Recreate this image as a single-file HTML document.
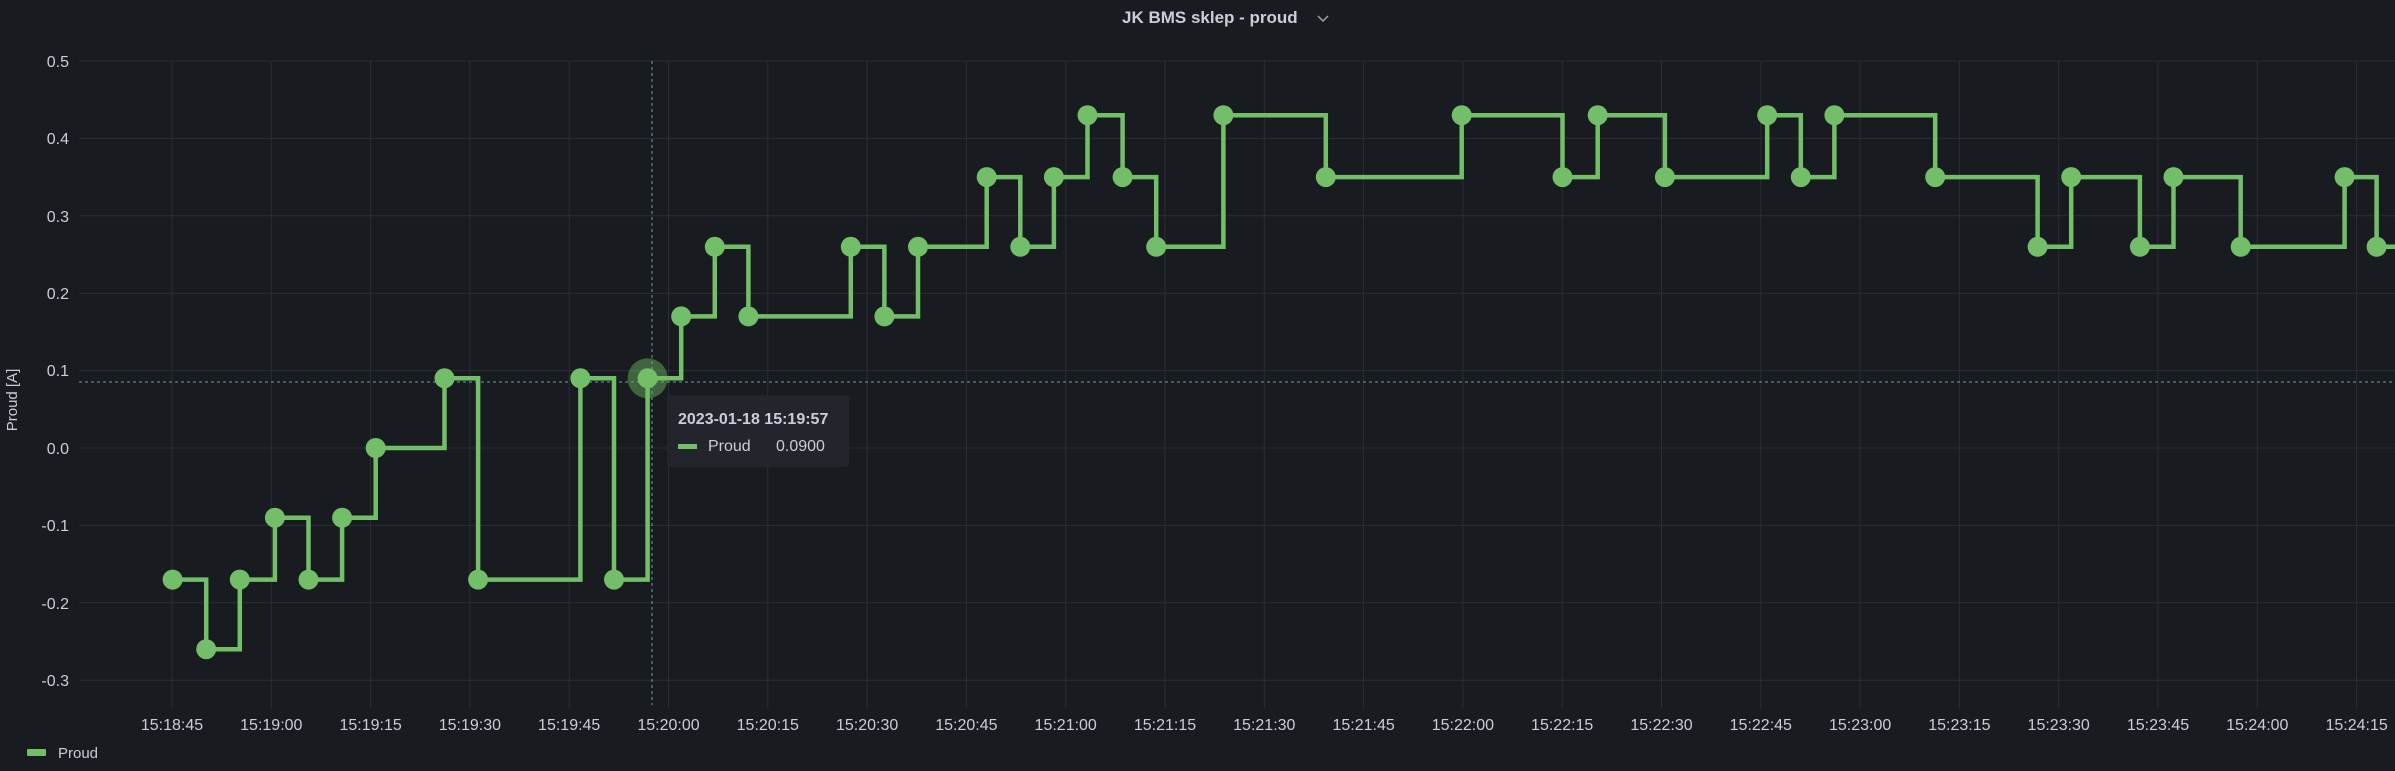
<!DOCTYPE html>
<html><head><meta charset="utf-8"><style>
html,body{margin:0;padding:0;background:#181b1f;width:2395px;height:771px;overflow:hidden}
svg{display:block}
text{font-family:"Liberation Sans",sans-serif;fill:#ccccdc}
</style></head><body>
<svg width="2395" height="771" viewBox="0 0 2395 771">
<rect width="2395" height="771" fill="#181b1f"/>
<text x="1122" y="23" font-size="17" font-weight="bold" fill="#d8d9e3">JK BMS sklep - proud</text>
<path d="M1318 16 l5 5 l5 -5" stroke="#9fa1ab" stroke-width="1.5" fill="none"/>
<g stroke="#2b2e34" stroke-width="1">
<line x1="79" x2="2395" y1="61" y2="61"/><line x1="79" x2="2395" y1="138.4" y2="138.4"/>
<line x1="79" x2="2395" y1="215.8" y2="215.8"/><line x1="79" x2="2395" y1="293.2" y2="293.2"/>
<line x1="79" x2="2395" y1="370.6" y2="370.6"/><line x1="79" x2="2395" y1="448" y2="448"/>
<line x1="79" x2="2395" y1="525.4" y2="525.4"/><line x1="79" x2="2395" y1="602.8" y2="602.8"/>
<line x1="79" x2="2395" y1="680.2" y2="680.2"/>
</g>
<g id="vg" stroke="#2b2e34" stroke-width="1"></g>
<g font-size="16" text-anchor="end">
<text x="69" y="67">0.5</text><text x="69" y="144">0.4</text><text x="69" y="222">0.3</text>
<text x="69" y="299">0.2</text><text x="69" y="376">0.1</text><text x="69" y="454">0.0</text>
<text x="69" y="531">-0.1</text><text x="69" y="609">-0.2</text><text x="69" y="686">-0.3</text>
</g>
<text transform="translate(17,400) rotate(-90)" font-size="15" text-anchor="middle">Proud [A]</text>
<g id="xl" font-size="16" text-anchor="middle"></g>
<line x1="652" x2="652" y1="61" y2="705" stroke="#8ab8d0" stroke-width="1" stroke-dasharray="3,3" opacity="0.8"/>
<line x1="79" x2="2395" y1="382" y2="382" stroke="#8ab8d0" stroke-width="1" stroke-dasharray="3,3" opacity="0.8"/>
<path fill="none" stroke="#73bf69" stroke-width="4.5" stroke-linejoin="miter" d="M172.6 579.6 H206.2 V649.2 H239.8 V579.6 H274.9 V517.7 H308.5 V579.6 H342.1 V517.7 H375.7 V448 H444.5 V378.3 H478.1 V579.6 H580.4 V378.3 H614 V579.6 H647.6 V378.3 H681.2 V316.4 H714.8 V246.8 H748.4 V316.4 H850.8 V246.8 H884.4 V316.4 H918 V246.8 H986.7 V177.1 H1020.3 V246.8 H1053.9 V177.1 H1087.5 V115.2 H1122.6 V177.1 H1156.2 V246.8 H1223.4 V115.2 H1325.8 V177.1 H1461.7 V115.2 H1562.5 V177.1 H1597.7 V115.2 H1664.9 V177.1 H1767.2 V115.2 H1800.8 V177.1 H1834.4 V115.2 H1935.2 V177.1 H2037.6 V246.8 H2071.2 V177.1 H2139.9 V246.8 H2173.5 V177.1 H2240.7 V246.8 H2344.6 V177.1 H2376.6 V246.8 H2395"/>
<circle cx="647.6" cy="378.3" r="20" fill="#73bf69" opacity="0.45"/>
<g id="pts" fill="#73bf69"></g>
<rect x="667" y="395" width="182" height="72" rx="3" fill="#22252b"/>
<text x="678" y="424" font-size="16" font-weight="bold" fill="#d8d9e3">2023-01-18 15:19:57</text>
<rect x="678" y="444" width="19" height="5" fill="#73bf69"/>
<text x="708" y="451" font-size="16" fill="#ccccdc">Proud</text>
<text x="776" y="451" font-size="16" fill="#ccccdc">0.0900</text>
<rect x="27" y="749" width="19" height="7" rx="1" fill="#73bf69"/>
<text x="58" y="758" font-size="15" fill="#ccccdc">Proud</text>
</svg>
<script>
var ns="http://www.w3.org/2000/svg";
var vg=document.getElementById('vg'),xl=document.getElementById('xl'),pts=document.getElementById('pts');
var labels=["15:18:45","15:19:00","15:19:15","15:19:30","15:19:45","15:20:00","15:20:15","15:20:30","15:20:45","15:21:00","15:21:15","15:21:30","15:21:45","15:22:00","15:22:15","15:22:30","15:22:45","15:23:00","15:23:15","15:23:30","15:23:45","15:24:00","15:24:15"];
for(var i=0;i<labels.length;i++){var x=172+i*99.3;
var l=document.createElementNS(ns,'line');l.setAttribute('x1',x);l.setAttribute('x2',x);l.setAttribute('y1',61);l.setAttribute('y2',708);vg.appendChild(l);
var t=document.createElementNS(ns,'text');t.setAttribute('x',x);t.setAttribute('y',730);t.textContent=labels[i];xl.appendChild(t);}
var P=[[172.6,579.6],[206.2,649.2],[239.8,579.6],[274.9,517.7],[308.5,579.6],[342.1,517.7],[375.7,448],[444.5,378.3],[478.1,579.6],[580.4,378.3],[614,579.6],[647.6,378.3],[681.2,316.4],[714.8,246.8],[748.4,316.4],[850.8,246.8],[884.4,316.4],[918,246.8],[986.7,177.1],[1020.3,246.8],[1053.9,177.1],[1087.5,115.2],[1122.6,177.1],[1156.2,246.8],[1223.4,115.2],[1325.8,177.1],[1461.7,115.2],[1562.5,177.1],[1597.7,115.2],[1664.9,177.1],[1767.2,115.2],[1800.8,177.1],[1834.4,115.2],[1935.2,177.1],[2037.6,246.8],[2071.2,177.1],[2139.9,246.8],[2173.5,177.1],[2240.7,246.8],[2344.6,177.1],[2376.6,246.8]];
P.forEach(function(p){var c=document.createElementNS(ns,'circle');c.setAttribute('cx',p[0]);c.setAttribute('cy',p[1]);c.setAttribute('r',10);pts.appendChild(c);});
</script>
</body></html>
